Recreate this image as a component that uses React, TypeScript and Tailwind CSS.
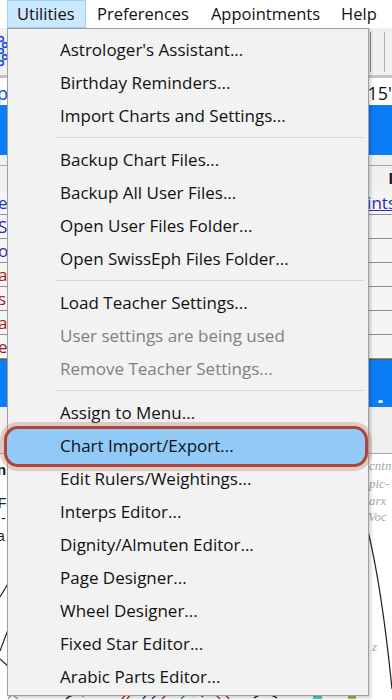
import React from "react";

type Item = { label: string; disabled?: boolean; active?: boolean };

const GROUPS: Item[][] = [
  [
    { label: "Astrologer's Assistant..." },
    { label: "Birthday Reminders..." },
    { label: "Import Charts and Settings..." },
  ],
  [
    { label: "Backup Chart Files..." },
    { label: "Backup All User Files..." },
    { label: "Open User Files Folder..." },
    { label: "Open SwissEph Files Folder..." },
  ],
  [
    { label: "Load Teacher Settings..." },
    { label: "User settings are being used", disabled: true },
    { label: "Remove Teacher Settings...", disabled: true },
  ],
  [
    { label: "Assign to Menu..." },
    { label: "Chart Import/Export...", active: true },
    { label: "Edit Rulers/Weightings..." },
    { label: "Interps Editor..." },
    { label: "Dignity/Almuten Editor..." },
    { label: "Page Designer..." },
    { label: "Wheel Designer..." },
    { label: "Fixed Star Editor..." },
    { label: "Arabic Parts Editor..." },
  ],
];

const FONT = "font-['Open_Sans','Noto_Sans',sans-serif]";

const TABLE_ROWS = [
  { left: "e", color: "text-[#2a2ab8]", right: "ints" },
  { left: "S", color: "text-[#2a2ab8]" },
  { left: "o", color: "text-[#2a2ab8]" },
  { left: "a", color: "text-[#a81818]" },
  { left: "s", color: "text-[#a81818]" },
  { left: "a", color: "text-[#a81818]" },
  { left: "e", color: "text-[#a81818]" },
];

function MenuRow({ item }: { item: Item }) {
  if (item.active) {
    return (
      <div className="relative h-[33px]">
        {/* annotation ring around the hovered entry */}
        <div className="absolute -left-[4px] right-[0px] -top-[3px] -bottom-[5px] rounded-[14px] border-[3px] border-[#ad4538] bg-[#91c9f7] shadow-[0_0_0_4px_rgba(196,128,118,0.35)]" />
        <div className="relative flex h-full items-center pl-[52px] text-[#111]">
          {item.label}
        </div>
      </div>
    );
  }
  return (
    <div
      className={`flex h-[33px] items-center pl-[52px] ${
        item.disabled ? "text-[#808080]" : "text-[#111]"
      }`}
    >
      {item.label}
    </div>
  );
}

function ChartArea() {
  return (
    <svg className="block h-[245px] w-full" viewBox="0 455 392 245">
      <rect x="0" y="455" width="392" height="245" fill="#ffffff" />
      <text x="-3" y="476" fontSize="15" fontWeight="700" fontFamily="Liberation Sans, sans-serif" fill="#111">n</text>
      <text x="-2" y="509" fontSize="14" fontFamily="Liberation Sans, sans-serif" fill="#222">Fr</text>
      <text x="1" y="524" fontSize="14" fontFamily="Liberation Sans, sans-serif" fill="#222">-</text>
      <text x="-3" y="542" fontSize="14" fontFamily="Liberation Sans, sans-serif" fill="#222">a</text>
      <g fontSize="13" fontStyle="italic" fontFamily="Liberation Serif, serif" fill="#a8a8a8">
        <text x="369" y="471">cntn</text>
        <text x="369" y="489">pic-</text>
        <text x="369" y="506">arx</text>
        <text x="368" y="522">Voc</text>
        <text x="372" y="652">z</text>
      </g>
      <g stroke="#222" strokeWidth="1.2" fill="none">
        <path d="M0 598 L9 583" />
        <path d="M0 652 L9 628" />
        <path d="M0 660 L9 668" />
        <path d="M368 532 Q382 590 392 690" />
      </g>
      {/* chart glyphs peeking below the menu */}
      <g strokeWidth="1.4" fill="none">
        <path d="M8 700 L12 695 L18 700" stroke="#9aa0b0" />
        <path d="M66 700 Q74 693 84 697" stroke="#222" />
        <path d="M122 700 L127 694 M127 700 L132 694" stroke="#d02020" />
        <path d="M143 700 L148 694 L158 694 L152 700" stroke="#2030d0" />
        <path d="M162 700 L168 694" stroke="#d02020" />
        <path d="M181 700 L186 695" stroke="#20a030" />
        <path d="M193 697 Q198 692 203 698" stroke="#2030d0" />
        <path d="M214 694 L220 700 M224 694 L229 700" stroke="#d02020" />
        <path d="M254 699 Q265 691 277 699" stroke="#222" />
        <rect x="313" y="695" width="9" height="5" fill="#40d0d0" stroke="none" />
        <rect x="348" y="695" width="8" height="5" fill="#a0c020" stroke="none" />
      </g>
    </svg>
  );
}

export default function App() {
  return (
    <div className={`relative h-[700px] w-[392px] overflow-hidden bg-white text-[17px] ${FONT}`}>
      {/* Menu bar */}
      <div className="flex h-[28px] items-stretch bg-white pl-[7px] text-[16.5px] text-[#111]">
        <div className="flex w-[79px] items-center border border-[#99d1ff] bg-[#cce8ff] pl-[9px]">Utilities</div>
        <div className="flex items-center pl-[11px] pr-[11px]">Preferences</div>
        <div className="flex items-center pl-[11px] pr-[10px]">Appointments</div>
        <div className="flex items-center pl-[11px]">Help</div>
      </div>

      {/* Toolbar */}
      <div className="flex h-[47px] items-center justify-between bg-[#f0f0f0]">
        <svg width="10" height="34" viewBox="0 0 10 34" className="-ml-[2px]">
          <g fill="none" stroke="#1f4fe0" strokeWidth="1.6">
            <circle cx="3" cy="4" r="2.4" />
            <circle cx="7" cy="10" r="2.4" />
            <circle cx="3" cy="16" r="2.4" />
            <circle cx="7" cy="22" r="2.4" />
            <circle cx="3" cy="28" r="2.4" />
          </g>
        </svg>
        <div className="flex h-[40px] items-stretch gap-[13px] pr-[7px]">
          <div className="w-px bg-[#8a8a8a]" />
          <div className="w-px bg-[#b0b0b0]" />
        </div>
      </div>
      <div className="h-[3px] bg-[#c4c4c4]" />

      {/* Field row */}
      <div className="flex h-[27px] items-end justify-between bg-white text-[18px] leading-[24px]">
        <span className="-ml-[3px] text-[#1f3fc8]">p</span>
        <span className="border-l border-[#a0a0a0] pl-[3px] text-[#111]">15'</span>
      </div>

      {/* Blue band */}
      <div className="h-[50px] bg-[#0a7cf6]" />

      <div className="h-[10px] bg-[#f0f0f0]" />
      <div className="flex h-[26px] items-center justify-end border-t border-[#a8a8a8] bg-[#f0f0f0] text-[15px] font-bold text-[#111]">
        <span className="-mr-[1px]">l</span>
      </div>

      {/* Table rows */}
      {TABLE_ROWS.map((r, i) => (
        <div
          key={i}
          className="flex h-[24px] items-center justify-between border-b border-[#8f8f8f] bg-[#f5f5f5] text-[17px]"
        >
          <span className={`-ml-[2px] ${r.color}`}>{r.left}</span>
          {r.right && <span className="-mr-[4px] text-[#2a2ab8] underline">{r.right}</span>}
        </div>
      ))}

      {/* Lower blue band */}
      <div className="flex h-[48px] items-end justify-end border-t border-[#5a5a5a] bg-[#0a7cf6] pb-[4px] pr-[9px]">
        <div className="h-[3px] w-[5px] rounded-full bg-[#d8ecff]" />
      </div>
      <div className="h-[47px] border-b border-[#a8a8a8] bg-[#f0f0f0]" />

      <ChartArea />

      {/* Utilities dropdown */}
      <div className="absolute left-[7px] top-[28px] z-10 w-[362px] border border-[#a0a0a0] bg-[#f2f2f2] pb-[2px] pt-[4px] shadow-[2px_2px_3px_rgba(0,0,0,0.18)]">
        {GROUPS.map((group, gi) => (
          <div key={gi}>
            {gi > 0 && (
              <div className="flex h-[11px] items-center pl-[47px] pr-[4px]">
                <div className="h-px w-full bg-[#d7d7d7]" />
              </div>
            )}
            {group.map((item) => (
              <MenuRow key={item.label} item={item} />
            ))}
          </div>
        ))}
      </div>
    </div>
  );
}
